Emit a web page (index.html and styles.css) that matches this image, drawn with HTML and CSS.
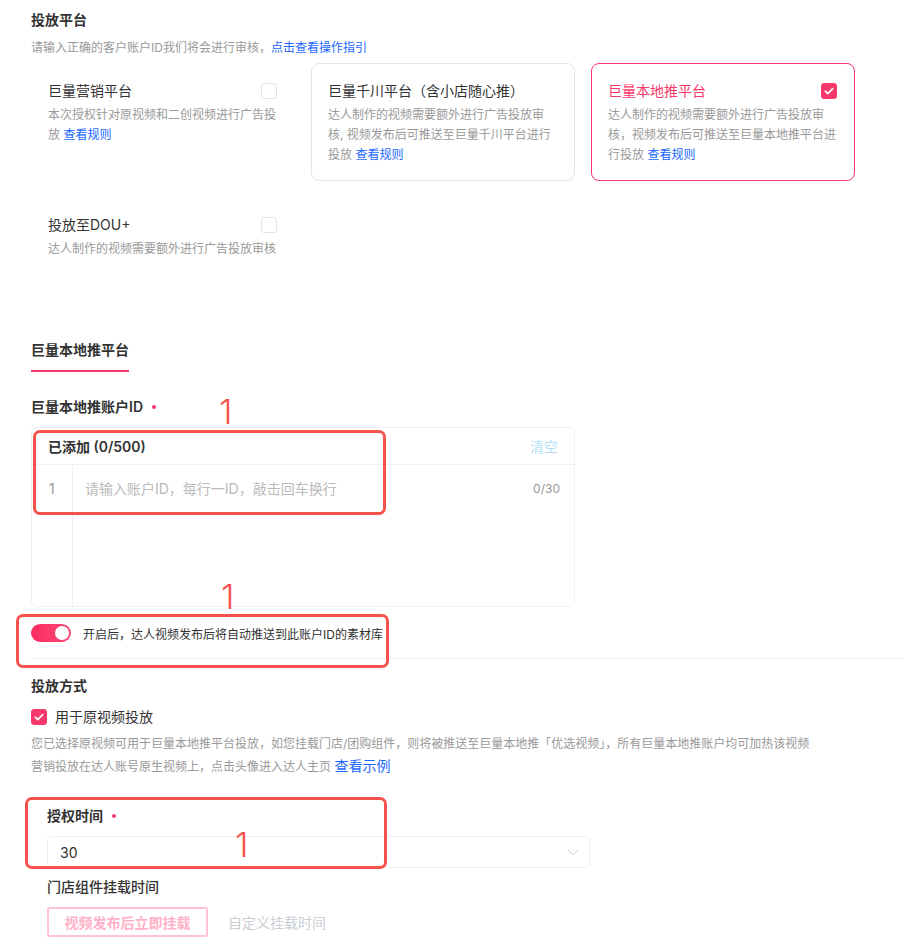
FILE: index.html
```html
<!DOCTYPE html>
<html lang="zh-CN">
<head>
<meta charset="utf-8">
<title>投放平台</title>
<link rel="stylesheet" href="styles.css">
</head>
<body>
<div class="page">
  <h2 class="title">投放平台</h2>
  <p class="hint">请输入正确的客户账户ID我们将会进行审核，<a class="link">点击查看操作指引</a></p>

  <div class="cards">
    <div class="card">
      <div class="card-head"><span class="card-title">巨量营销平台</span><span class="cb"></span></div>
      <p class="card-desc">本次授权针对原视频和二创视频进行广告投放 <a class="link">查看规则</a></p>
    </div>
    <div class="card bordered">
      <div class="card-head"><span class="card-title">巨量千川平台（含小店随心推）</span></div>
      <p class="card-desc">达人制作的视频需要额外进行广告投放审核, 视频发布后可推送至巨量千川平台进行投放 <a class="link">查看规则</a></p>
    </div>
    <div class="card active">
      <div class="card-head"><span class="card-title">巨量本地推平台</span><span class="cb checked"><svg viewBox="0 0 16 16" width="16" height="16"><path d="M4.3 8.2l2.5 2.4 4.9-5" fill="none" stroke="#fff" stroke-width="1.6" stroke-linecap="round" stroke-linejoin="round"/></svg></span></div>
      <p class="card-desc">达人制作的视频需要额外进行广告投放审核，视频发布后可推送至巨量本地推平台进行投放 <a class="link">查看规则</a></p>
    </div>
    <div class="card">
      <div class="card-head"><span class="card-title">投放至DOU+</span><span class="cb"></span></div>
      <p class="card-desc">达人制作的视频需要额外进行广告投放审核</p>
    </div>
  </div>

  <div class="tabs"><span class="tab">巨量本地推平台</span></div>

  <div class="label">巨量本地推账户ID<span class="req"></span></div>
  <div class="editor">
    <div class="editor-head"><span class="added">已添加 (0/500)</span><span class="clear">清空</span></div>
    <div class="editor-body">
      <div class="gutter">1</div>
      <div class="editor-line"><span class="ph">请输入账户ID，每行一ID，敲击回车换行</span><span class="count">0/30</span></div>
    </div>
  </div>

  <div class="switch-row">
    <span class="switch"><span class="knob"></span></span>
    <span class="switch-text">开启后，达人视频发布后将自动推送到此账户ID的素材库</span>
  </div>

  <div class="divider"></div>

  <h3 class="sub">投放方式</h3>
  <div class="check-row"><span class="cb checked"><svg viewBox="0 0 16 16" width="16" height="16"><path d="M4.3 8.2l2.5 2.4 4.9-5" fill="none" stroke="#fff" stroke-width="1.6" stroke-linecap="round" stroke-linejoin="round"/></svg></span><span>用于原视频投放</span></div>
  <p class="desc">您已选择原视频可用于巨量本地推平台投放，如您挂载门店/团购组件，则将被推送至巨量本地推「优选视频」，所有巨量本地推账户均可加热该视频<br>营销投放在达人账号原生视频上，点击头像进入达人主页 <a class="link big">查看示例</a></p>

  <div class="indent">
    <div class="label2">授权时间<span class="req"></span></div>
    <div class="select"><span>30</span><svg width="12" height="7" viewBox="0 0 12 7"><path d="M1 1l5 5 5-5" fill="none" stroke="#c9cdd4" stroke-width="1"/></svg></div>
    <div class="label3">门店组件挂载时间</div>
    <div class="radio-row"><span class="btn-on">视频发布后立即挂载</span><span class="btn-off">自定义挂载时间</span></div>
  </div>
</div>

<div class="anno box1"></div>
<div class="anno box2"></div>
<div class="anno box3"></div>
<span class="num n1">1</span>
<span class="num n2">1</span>
<span class="num n3">1</span>
</body>
</html>
```

FILE: styles.css
```css
* { box-sizing: border-box; }
html, body { margin: 0; padding: 0; background: #fff; }
body {
  position: relative;
  width: 914px;
  height: 949px;
  overflow: hidden;
  font-family: Inter, "Noto Sans CJK SC", sans-serif;
  color: #333;
  font-size: 14px;
}
.page { padding: 10px 10px 0 31px; }
p { margin: 0; }
h2, h3 { margin: 0; }
.link { color: #1966ff; text-decoration: none; }
.title { font-size: 14px; font-weight: 600; line-height: 20px; color: #333; }
.hint { margin-top: 8px; font-size: 12px; line-height: 20px; color: #999; }

.cards {
  margin-top: 5px;
  display: grid;
  grid-template-columns: repeat(3, 264px);
  gap: 16px;
  align-items: start;
}
.card {
  border: 1px solid transparent;
  border-radius: 8px;
  padding: 17px 17px 15px 16px;
}
.card.bordered { border-color: #e4e5ea; }
.card.active { border-color: #f7386b; }
.card-head { display: flex; justify-content: space-between; align-items: center; height: 20px; }
.card-title { font-size: 14px; line-height: 20px; color: #333; }
.card.active .card-title { color: #f7386b; }
.card-desc { margin-top: 4px; font-size: 12px; line-height: 20px; color: #999; }

.cb {
  width: 16px; height: 16px;
  border: 1px solid #e3e3e6;
  border-radius: 3px;
  display: inline-flex;
  flex: none;
}
.cb.checked { background: #f7386b; border-color: #f7386b; }
.cb.checked svg { margin: -1px; }

.tabs { margin-top: 65px; }
.tab {
  display: inline-block;
  font-size: 14px; font-weight: 600; line-height: 20px;
  padding-bottom: 10px;
  border-bottom: 2px solid #f7386b;
  color: #333;
}
.label { margin-top: 25px; font-size: 14px; font-weight: 600; line-height: 20px; display: flex; align-items: center; }
.req { width: 4px; height: 4px; border-radius: 50%; background: #f7386b; margin-left: 9px; }

.editor {
  margin-top: 10px;
  width: 544px;
  height: 180px;
  border: 1px solid #f0f0f3;
  border-radius: 6px;
  display: flex;
  flex-direction: column;
}
.editor-head {
  height: 37px;
  border-bottom: 1px solid #f0f0f3;
  display: flex;
  justify-content: space-between;
  align-items: center;
  padding: 0 16px 0 16px;
}
.added { font-size: 14px; font-weight: 600; color: #333; }
.clear { font-size: 14px; color: #b5dff8; }
.editor-body { flex: 1; display: flex; }
.gutter {
  width: 41px;
  border-right: 1px solid #f0f0f3;
  padding: 14px 0 0 17px;
  line-height: 20px;
  color: #999;
  font-size: 14px;
}
.editor-line {
  flex: 1;
  display: flex;
  justify-content: space-between;
  padding: 14px 14px 0 12px;
  line-height: 20px;
  height: 48px;
}
.ph { font-size: 14px; color: #bbb; }
.count { font-size: 12px; color: #999; }

.switch-row { margin-top: 17px; height: 18px; display: flex; align-items: center; }
.switch {
  width: 40px; height: 18px; border-radius: 9px;
  background: linear-gradient(90deg, #fe2c60, #f9487a);
  position: relative;
  flex: none;
}
.knob {
  position: absolute; right: 2px; top: 2px;
  width: 14px; height: 14px; border-radius: 50%; background: #fff;
}
.switch-text { margin-left: 12px; font-size: 12px; color: #333; }

.divider { margin-top: 16px; height: 1px; background: #efeff2; width: 873px; }

.sub { margin-top: 17px; font-size: 14px; font-weight: 600; line-height: 20px; }
.check-row { margin-top: 11px; display: flex; align-items: center; gap: 8px; line-height: 20px; font-size: 14px; }
.desc { margin-top: 6px; font-size: 12px; line-height: 22px; color: #999; white-space: nowrap; }
.desc .big { font-size: 14px; }

.indent { padding-left: 16px; }
.label2 { margin-top: 28px; font-size: 14px; font-weight: 600; line-height: 20px; display: flex; align-items: center; }
.select {
  margin-top: 10px;
  width: 543px; height: 32px;
  border: 1px solid #f0f0f3;
  border-radius: 4px;
  display: flex; align-items: center; justify-content: space-between;
  padding: 0 10px 0 12px;
  font-size: 14px;
}
.label3 { margin-top: 9px; font-size: 14px; line-height: 20px; font-weight: 500; }
.radio-row { margin-top: 10px; display: flex; align-items: center; gap: 20px; }
.btn-on {
  height: 30px; width: 161px;
  border: 2px solid #ffc3d4;
  border-radius: 2px;
  display: inline-flex; align-items: center; justify-content: center;
  font-size: 14px; font-weight: 600; color: #ffb1c8;
}
.btn-off { font-size: 14px; color: #c9cdd4; }

.anno {
  position: absolute;
  border: 3px solid #f5524b;
  border-radius: 7px;
}
.box1 { left: 33px; top: 430px; width: 353px; height: 85px; }
.box2 { left: 16px; top: 614px; width: 373px; height: 54px; }
.box3 { left: 25px; top: 797px; width: 362px; height: 72px; }
.num {
  position: absolute;
  font-family: Inter, sans-serif;
  font-weight: 300;
  font-size: 34px;
  line-height: 34px;
  color: #f5524b;
}
.n1 { left: 219px; top: 395px; }
.n2 { left: 221px; top: 580px; }
.n3 { left: 235px; top: 828px; }
```
